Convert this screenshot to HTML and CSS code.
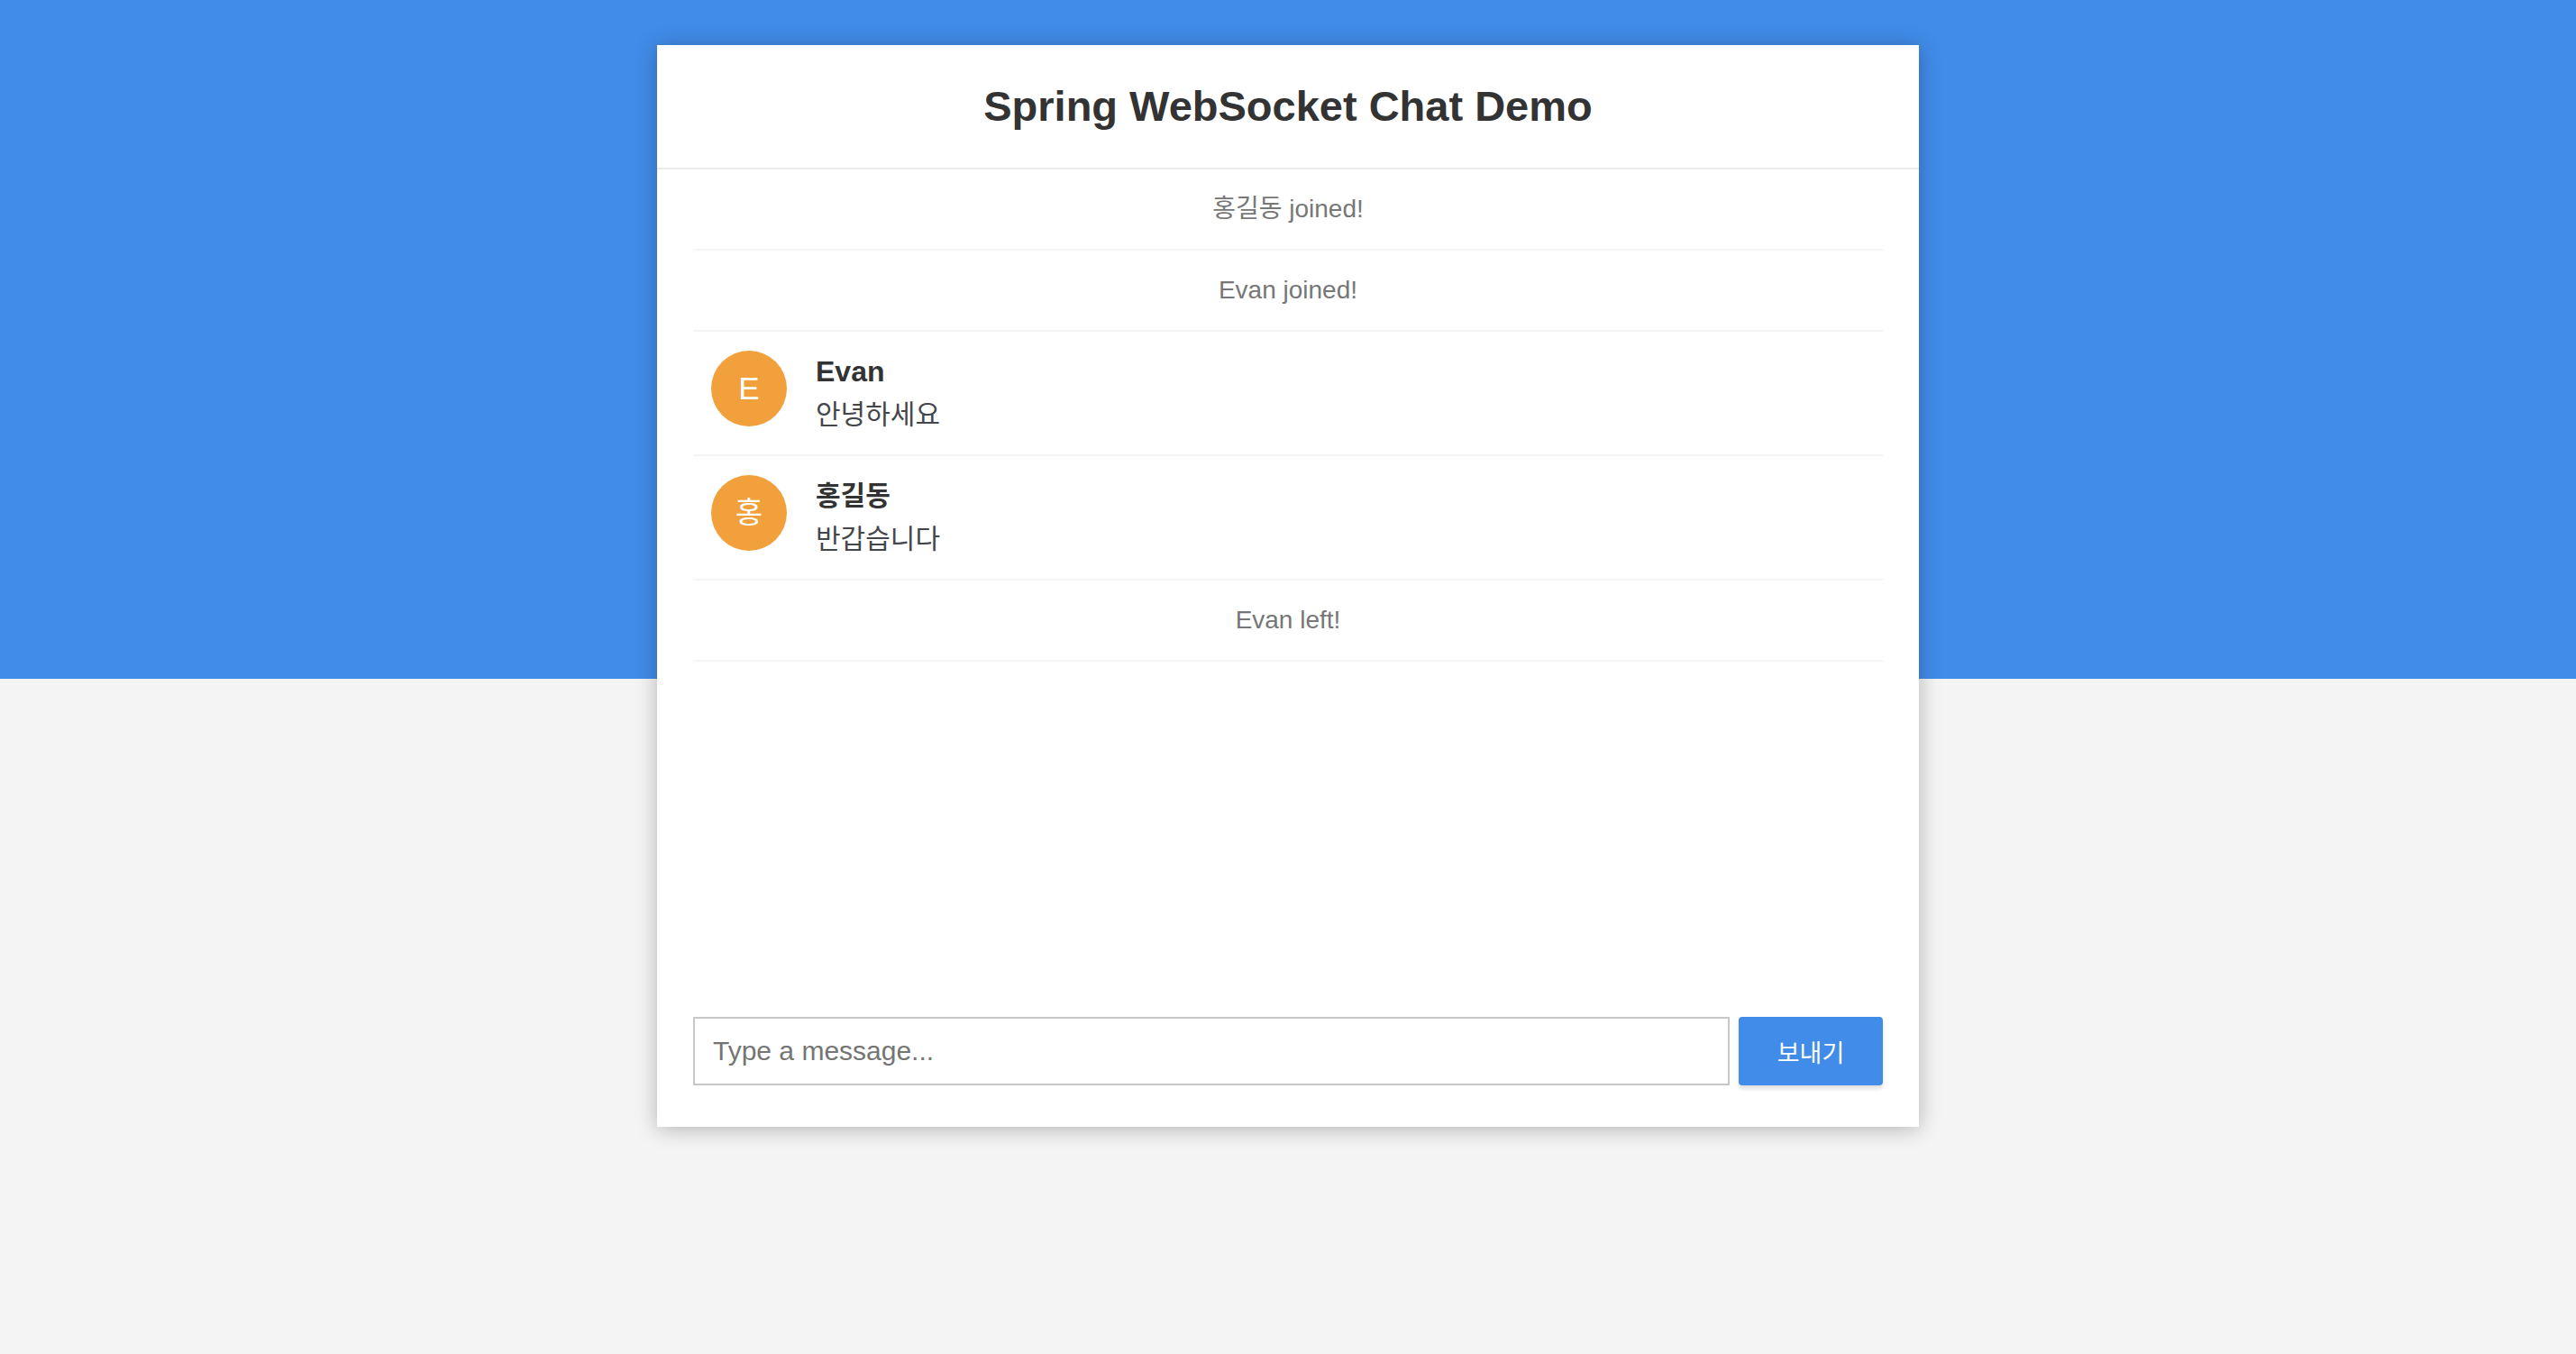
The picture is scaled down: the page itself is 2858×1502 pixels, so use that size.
FILE: index.html
```html
<!DOCTYPE html>
<html lang="ko">
<head>
<meta charset="utf-8">
<title>Spring WebSocket Chat Demo</title>
<link rel="stylesheet" href="styles.css">
</head>
<body>
<div class="page">
  <div class="chat-container">
    <div class="chat-header">
      <h2>Spring WebSocket Chat Demo</h2>
    </div>
    <ul class="message-area">
      <li class="event-message"><p>홍길동 joined!</p></li>
      <li class="event-message"><p>Evan joined!</p></li>
      <li class="chat-message">
        <i class="avatar">E</i>
        <span class="sender">Evan</span>
        <p class="ko">안녕하세요</p>
      </li>
      <li class="chat-message">
        <i class="avatar ko-avatar">홍</i>
        <span class="sender ko">홍길동</span>
        <p class="ko">반갑습니다</p>
      </li>
      <li class="event-message"><p>Evan left!</p></li>
    </ul>
    <form class="message-form">
      <div class="input-group">
        <input type="text" class="form-control" placeholder="Type a message...">
        <button type="button" class="primary">보내기</button>
      </div>
    </form>
  </div>
</div>
</body>
</html>
```

FILE: styles.css
```css
* {
  box-sizing: border-box;
}

html, body {
  height: 100%;
  overflow: hidden;
}

body {
  margin: 0;
  padding: 0;
  font-family: "Liberation Sans", "Noto Sans CJK KR", sans-serif;
  font-size: 32px;
  line-height: 1.58;
  color: #333;
  background-color: #f4f4f4;
  position: relative;
}

body::before {
  content: "";
  position: absolute;
  top: 0;
  left: 0;
  width: 100%;
  height: 753px;
  background: #418ce9;
  z-index: 0;
}

.page {
  position: relative;
  z-index: 1;
  height: 100%;
  padding-top: 50px;
}

.chat-container {
  max-width: 1400px;
  height: 1200px;
  margin: 0 auto;
  background: #fff;
  box-shadow: 0 2px 22px rgba(0, 0, 0, 0.27);
  display: flex;
  flex-direction: column;
}

.chat-header {
  text-align: center;
  padding: 30px;
  border-bottom: 2px solid #ececec;
}

.chat-header h2 {
  margin: 0;
  font-size: 47px;
  line-height: 76px;
  font-weight: 700;
  color: #333;
}

.message-area {
  list-style: none;
  margin: 0;
  padding: 0 40px;
  height: 900px;
  flex: none;
  overflow: hidden;
}

.message-area li {
  margin: 0;
  padding: 20px 40px;
  line-height: 48px;
  border-bottom: 2px solid #f4f4f4;
}

.message-area li p {
  margin: 0;
  height: 48px;
}

.event-message {
  text-align: center;
}

.event-message p {
  color: #777;
  font-size: 28px;
}

.chat-message {
  position: relative;
  padding-left: 136px !important;
}

.avatar {
  position: absolute;
  left: 20px;
  top: 21px;
  width: 84px;
  height: 84px;
  border-radius: 50%;
  background: #f1a03b;
  color: #fff;
  font-style: normal;
  font-size: 35px;
  line-height: 84px;
  text-align: center;
}

.ko-avatar {
  font-size: 33px;
}

.sender {
  display: block;
  height: 48px;
  font-weight: 700;
  color: #333;
}

.chat-message p {
  color: #43464b;
}

.message-area .ko {
  font-size: 30px;
}

.message-form {
  padding: 40px;
}

.input-group {
  display: flex;
  gap: 10px;
}

.form-control {
  width: 1150px;
  height: 76px;
  font-family: "Liberation Sans", "Noto Sans CJK KR", sans-serif;
  font-size: 30px;
  border: 2px solid #c8c8c8;
  padding: 0 0 0 20px;
  outline: none;
  margin: 0;
  color: #333;
}

.form-control::placeholder {
  color: #757575;
}

button.primary {
  width: 160px;
  height: 76px;
  margin: 0;
  border: none;
  border-radius: 4px;
  background: #418ce9;
  color: #fff;
  font-family: "Liberation Sans", "Noto Sans CJK KR", sans-serif;
  font-size: 27px;
  box-shadow: 0 4px 4px rgba(0, 0, 0, 0.12);
}
```
